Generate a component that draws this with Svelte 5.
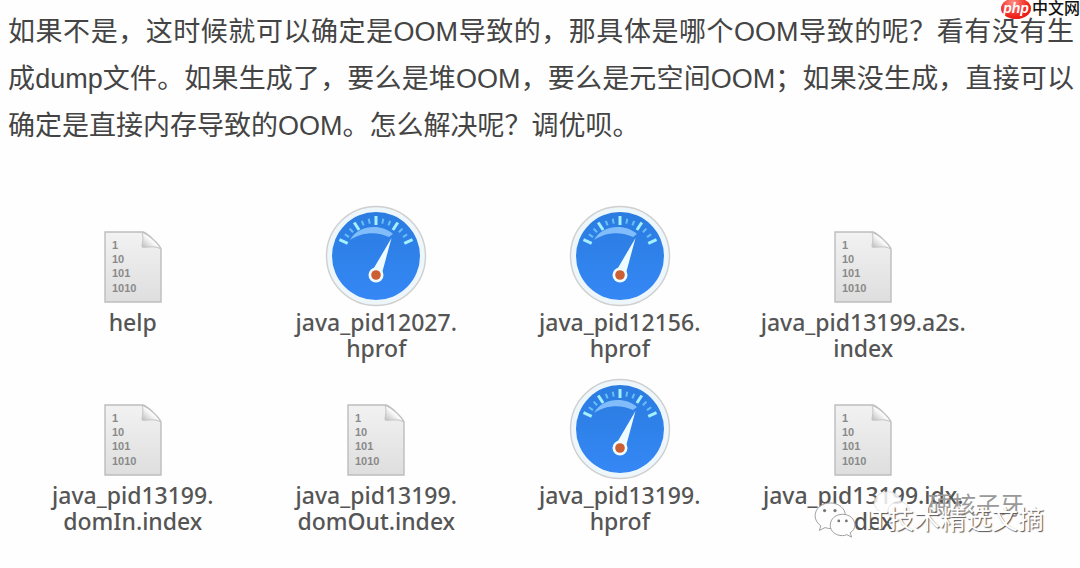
<script>
  const files = [
    { kind: 'binary', lines: ['help'] },
    { kind: 'dump', lines: ['java_pid12027.', 'hprof'] },
    { kind: 'dump', lines: ['java_pid12156.', 'hprof'] },
    { kind: 'binary', lines: ['java_pid13199.a2s.', 'index'] },
    { kind: 'binary', lines: ['java_pid13199.', 'domIn.index'] },
    { kind: 'binary', lines: ['java_pid13199.', 'domOut.index'] },
    { kind: 'dump', lines: ['java_pid13199.', 'hprof'] },
    { kind: 'binary', lines: ['java_pid13199.idx.', 'index'] }
  ];

  // gauge ticks, every third one is longer
  const ticks = Array.from({ length: 13 }, (_, i) => ({
    angle: -66 + i * 11,
    major: i % 3 === 0
  }));
</script>

<svelte:head>
  <title>OOM</title>
</svelte:head>

<main class="page">
  <div class="brand">
    <span class="brand-badge">php</span>
    <span class="brand-name">中文网</span>
  </div>

  <p class="intro">
    如果不是，这时候就可以确定是OOM导致的，那具体是哪个OOM导致的呢？看有没有生成dump文件。如果生成了，要么是堆OOM，要么是元空间OOM；如果没生成，直接可以确定是直接内存导致的OOM。怎么解决呢？调优呗。
  </p>

  <section class="files">
    {#each files as file}
      <figure class="file">
        <div class="icon">
          {#if file.kind === 'dump'}
            <svg width="102" height="102" viewBox="0 0 102 102" aria-hidden="true">
              <defs>
                <linearGradient id="dial" x1="0" y1="0" x2="0" y2="1">
                  <stop offset="0" stop-color="#2a7ce0" />
                  <stop offset="1" stop-color="#3587f5" />
                </linearGradient>
              </defs>
              <circle cx="51" cy="51" r="49.5" fill="#edf6fb" stroke="#cfcfd0" stroke-width="1.4" />
              <circle cx="51" cy="51" r="44" fill="url(#dial)" />
              {#each ticks as t}
                <line
                  x1="51" y1={t.major ? 11 : 13} x2="51" y2={t.major ? 20 : 18}
                  stroke={t.major ? '#a5f0ff' : '#69c0f5'}
                  stroke-width={t.major ? 3 : 2}
                  transform="rotate({t.angle} 51 51)"
                />
              {/each}
              <path d="M25 35C33 20 56 18 68 29L64 32C53 27 39 26 25 35Z" fill="#82bdfb" />
              <path d="M66.500 33L56.500 70L46 68Z" fill="#effcff" />
              <circle cx="51" cy="70" r="7.500" fill="#effcff" />
              <circle cx="51" cy="70" r="4.800" fill="#cd5f35" />
            </svg>
          {:else}
            <svg class="sheet" width="58" height="72" viewBox="0 0 58 72" aria-hidden="true">
              <defs>
                <linearGradient id="paper" x1="0" y1="0" x2="0" y2="1">
                  <stop offset="0" stop-color="#f2f2f2" />
                  <stop offset="1" stop-color="#dedede" />
                </linearGradient>
                <linearGradient id="fold" x1="0" y1="1" x2="1" y2="0">
                  <stop offset="0" stop-color="#b5b5b5" />
                  <stop offset="0.500" stop-color="#fafafa" />
                  <stop offset="1" stop-color="#d8d8d8" />
                </linearGradient>
              </defs>
              <path d="M1 1H39C43 2 55 13 57 18V71H1Z" fill="url(#paper)" stroke="#bdbdbd" stroke-width="1.4" />
              <path d="M38 1.500C40 7 38 12 38 16C43 17 51 14 56.500 18C54 12 45 4 38 1.500Z" fill="url(#fold)" stroke="#c4c4c4" />
              <g class="bits">
                <text x="8" y="18">1</text>
                <text x="8" y="32">10</text>
                <text x="8" y="46">101</text>
                <text x="8" y="61">1010</text>
              </g>
            </svg>
          {/if}
        </div>
        <figcaption>
          {#each file.lines as line}
            <span>{line}</span>
          {/each}
        </figcaption>
      </figure>
    {/each}

    <div class="mark mark-back">
      <svg width="40" height="32" viewBox="0 0 44 38" aria-hidden="true">
        <ellipse cx="17" cy="15" rx="16" ry="13" />
        <ellipse cx="30" cy="25" rx="13" ry="11" />
      </svg>
      <span>硬核子牙</span>
    </div>
    <div class="mark mark-front">
      <svg width="44" height="36" viewBox="0 0 44 38" aria-hidden="true">
        <path d="M17 1C8 1 1 7 1 14.500C1 19 3.500 22.500 7 25L5.500 30L11.500 27C13 27.500 15 28 17 28C26 28 33 22 33 14.500C33 7 26 1 17 1Z" />
        <path d="M30 13C22.500 13 17 18 17 24.500C17 31 22.500 35.500 30 35.500C31.500 35.500 33 35 34.500 34.500L39.500 37L38 32.500C41 30.500 43 28 43 24.500C43 18 37.500 13 30 13Z" />
        <g class="eyes">
          <circle cx="11" cy="9" r="1.700" />
          <circle cx="22" cy="9" r="1.700" />
          <circle cx="26" cy="20" r="1.500" />
          <circle cx="34" cy="20" r="1.500" />
        </g>
      </svg>
      <span>IT技术精选文摘</span>
    </div>
  </section>
</main>

<style>
  :global(body) {
    margin: 0;
    background: #fefefe;
  }

  .page {
    position: relative;
    font-family: 'Liberation Sans', 'Noto Sans CJK SC', sans-serif;
    color: #444;
  }

  .intro {
    margin: 0;
    padding: 9px 6px 0 8px;
    font-size: 27px;
    line-height: 47px;
    text-align: justify;
  }

  .brand {
    position: absolute;
    top: -2px;
    right: 0;
    display: flex;
    align-items: center;
    gap: 1px;
    line-height: 20px;
  }
  .brand-badge {
    width: 30px;
    height: 21px;
    border-radius: 50%;
    background: radial-gradient(ellipse at 40% 20%, #ff8a80, #f0231c 60%, #d91410);
    color: #fff;
    font-size: 14px;
    font-style: italic;
    font-weight: 700;
    text-align: center;
  }
  .brand-name {
    color: #111;
    font-size: 16px;
    font-weight: 500;
  }

  .files {
    position: relative;
    display: grid;
    grid-template-columns: repeat(4, 1fr);
    row-gap: 17px;
    padding: 55px 95px 32px 11px;
  }
  .file { margin: 0; }
  .icon {
    display: flex;
    justify-content: center;
    align-items: flex-end;
    height: 102px;
  }
  .sheet { padding-bottom: 4px; }
  .bits {
    fill: #8a8a8a;
    font-family: 'Liberation Sans', sans-serif;
    font-size: 11px;
    font-weight: 700;
  }

  figcaption {
    display: flex;
    flex-direction: column;
    align-items: center;
    padding-top: 2px;
    color: #555;
    font-family: 'Noto Sans', sans-serif;
    font-size: 23px;
    font-weight: 500;
    line-height: 26px;
    white-space: nowrap;
  }

  .mark {
    position: absolute;
    display: flex;
    align-items: center;
    gap: 8px;
    white-space: nowrap;
  }
  .mark svg {
    fill: #fefefe;
    stroke: #999;
    stroke-width: 1;
  }
  .mark-back {
    right: 56px;
    bottom: 44px;
    gap: 16px;
    color: #999;
    font-size: 24px;
    line-height: 32px;
  }
  .mark-back svg {
    opacity: 0.85;
    stroke: #ddd;
  }
  .mark-front {
    right: 36px;
    bottom: 27px;
    color: #fefefe;
    font-size: 26px;
    line-height: 38px;
    text-shadow: 1px 1px 1px #555;
  }
  .mark .eyes {
    fill: #777;
    stroke: none;
  }
</style>
